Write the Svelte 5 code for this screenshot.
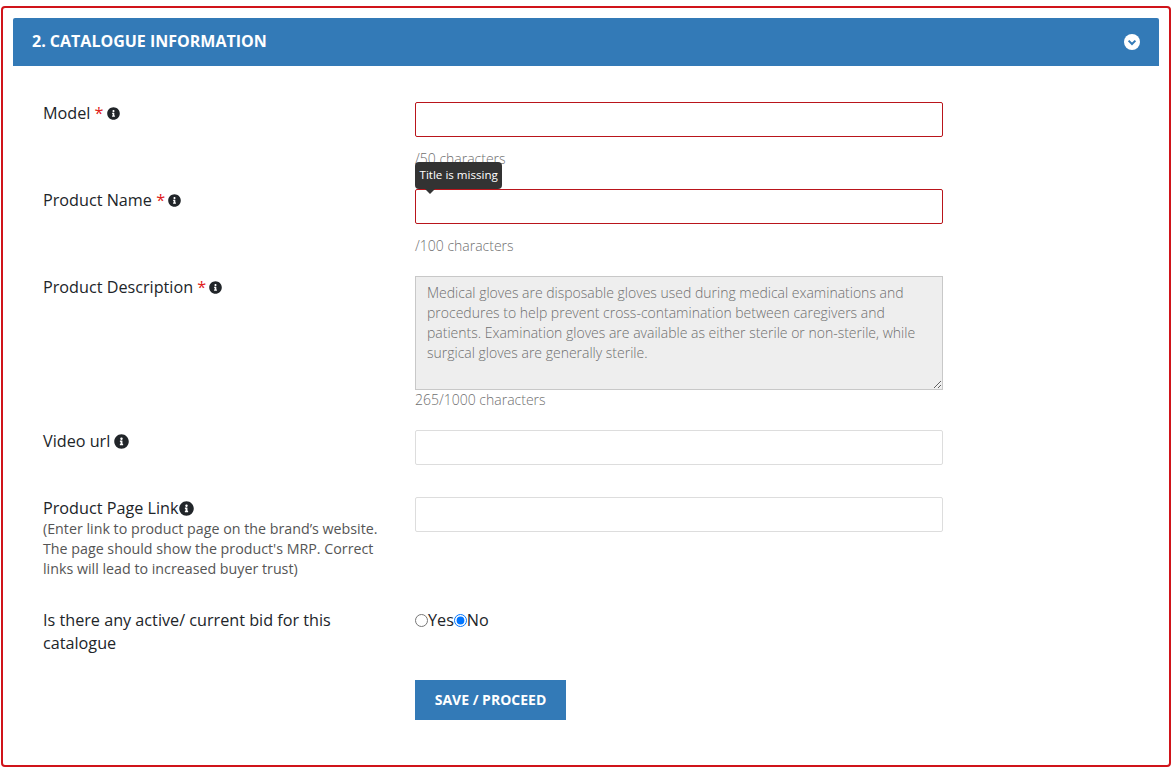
<script>
  const info = "M256 8C119.043 8 8 119.083 8 256c0 136.997 111.043 248 248 248s248-111.003 248-248C504 119.083 392.957 8 256 8zm0 110c23.196 0 42 18.804 42 42s-18.804 42-42 42-42-18.804-42-42 18.804-42 42-42zm56 254c0 6.627-5.373 12-12 12h-88c-6.627 0-12-5.373-12-12v-24c0-6.627 5.373-12 12-12h12v-64h-12c-6.627 0-12-5.373-12-12v-24c0-6.627 5.373-12 12-12h64c6.627 0 12 5.373 12 12v100h12c6.627 0 12 5.373 12 12v24z";
  const description = "Medical gloves are disposable gloves used during medical examinations and procedures to help prevent cross-contamination between caregivers and patients. Examination gloves are available as either sterile or non-sterile, while surgical gloves are generally sterile.";
</script>

<div class="panel">
  <header class="head">
    <h2>2. CATALOGUE INFORMATION</h2>
    <svg class="chev" viewBox="0 0 16 16" aria-hidden="true">
      <circle cx="8" cy="8" r="8" fill="#fff" />
      <path d="M4.6 6.6 8 10l3.4-3.4" fill="none" stroke="#337ab7" stroke-width="2" />
    </svg>
  </header>

  <form class="form" onsubmit={(e) => e.preventDefault()}>
    <div class="row r1">
      <div class="label">Model <span class="req">*</span> <svg class="i" viewBox="0 0 512 512"><path d={info} /></svg></div>
      <div class="field">
        <input class="err" type="text" />
        <div class="hint h1">/50 characters</div>
      </div>
    </div>

    <div class="row r2">
      <div class="label">Product Name <span class="req">*</span> <svg class="i" viewBox="0 0 512 512"><path d={info} /></svg></div>
      <div class="field">
        <input class="err" type="text" />
        <div class="hint h1">/100 characters</div>
        <div class="tip">Title is missing</div>
      </div>
    </div>

    <div class="row r3">
      <div class="label">Product Description <span class="req">*</span> <svg class="i" viewBox="0 0 512 512"><path d={info} /></svg></div>
      <div class="field">
        <textarea disabled value={description}></textarea>
        <div class="hint">265/1000 characters</div>
      </div>
    </div>

    <div class="row r4">
      <div class="label">Video url <svg class="i big" viewBox="0 0 512 512"><path d={info} /></svg></div>
      <div class="field"><input type="text" /></div>
    </div>

    <div class="row r5">
      <div class="label">
        Product Page Link<svg class="i big flush" viewBox="0 0 512 512"><path d={info} /></svg>
        <small>(Enter link to product page on the brand’s website. The page should show the product's MRP. Correct links will lead to increased buyer trust)</small>
      </div>
      <div class="field"><input type="text" /></div>
    </div>

    <div class="row r6">
      <div class="label tall">Is there any active/ current bid for this catalogue</div>
      <div class="field radios">
        <label><input type="radio" name="bid" />Yes</label>
        <label><input type="radio" name="bid" checked />No</label>
      </div>
    </div>

    <div class="row">
      <div></div>
      <div class="field"><button type="submit">SAVE / PROCEED</button></div>
    </div>
  </form>
</div>

<style>
  :global(body) {
    margin: 0;
    background: #fff;
    font-family: "Open Sans", "Liberation Sans", sans-serif;
    color: #212529;
  }
  .panel {
    box-sizing: border-box;
    width: 1170px;
    height: 761px;
    margin: 6px 0 0 1px;
    padding: 10px;
    border: 2px solid #d0141a;
    border-radius: 4px;
  }
  .head {
    height: 48px;
    background: #337ab7;
    border-radius: 2px 2px 0 0;
    display: flex;
    align-items: center;
    justify-content: space-between;
    padding: 0 19px 2px 19px;
    box-sizing: border-box;
  }
  h2 {
    margin: 0;
    font-size: 16px;
    font-weight: 700;
    color: #fff;
  }
  .chev {
    width: 16px;
    height: 16px;
    margin-top: 2px;
  }
  .form {
    padding: 36px 0 0 30px;
  }
  .row {
    display: grid;
    grid-template-columns: 372px 528px;
  }
  .r1, .r2 { margin-bottom: 20px; }
  .r3 { margin-bottom: 20px; }
  .r4 { margin-bottom: 32px; }
  .r5 { margin-bottom: 30px; }
  .r6 { margin-bottom: 25px; }
  .label {
    font-size: 16.2px;
    line-height: 22px;
    padding-right: 30px;
  }
  .label.tall {
    line-height: 23px;
  }
  .req { color: #e01b1b; }
  .i {
    width: 13px;
    height: 13px;
    fill: #212529;
    vertical-align: -1px;
    margin-left: -1px;
  }
  .i.big {
    width: 15px;
    height: 15px;
    vertical-align: -2px;
  }
  .i.flush {
    margin-left: 1px;
  }
  small {
    display: block;
    font-size: 14.25px;
    line-height: 20px;
    color: #555;
  }
  .field { position: relative; }
  input[type="text"] {
    display: block;
    box-sizing: border-box;
    width: 100%;
    height: 35px;
    border: 1px solid #ddd;
    border-radius: 2px;
    background: #fff;
    padding: 6px 12px;
  }
  input.err { border-color: #b9151b; }
  textarea {
    display: block;
    box-sizing: border-box;
    width: 100%;
    height: 114px;
    padding: 6px 11px;
    border: 1px solid #c8c8c8;
    border-radius: 0;
    background: #eee;
    color: #6f6f6f;
    font-family: inherit;
    font-size: 14px;
    font-weight: 300;
    line-height: 20px;
    resize: both;
  }
  .hint {
    font-size: 14px;
    font-weight: 300;
    line-height: 20px;
    color: #6f6f6f;
  }
  .h1 { margin-top: 12px; }
  .tip {
    position: absolute;
    left: 0;
    top: -27px;
    height: 27px;
    box-sizing: border-box;
    padding: 0 4.5px;
    background: #333;
    color: #fff;
    border-radius: 4px;
    font-size: 11.6px;
    line-height: 26px;
    white-space: nowrap;
  }
  .tip::after {
    content: "";
    position: absolute;
    left: 10px;
    top: 27px;
    border: 5px solid transparent;
    border-top-color: #333;
    border-bottom: 0;
  }
  .radios {
    display: flex;
    font-size: 16.2px;
    line-height: 23px;
  }
  .radios label {
    display: flex;
    align-items: center;
    height: 23px;
  }
  .radios input {
    margin: 0;
    width: 13px;
    height: 13px;
  }
  button {
    display: block;
    width: 151px;
    height: 40px;
    padding: 0 0 2px;
    border: 0;
    background: #337ab7;
    color: #fff;
    font-family: inherit;
    font-size: 14px;
    font-weight: 700;
  }
</style>
